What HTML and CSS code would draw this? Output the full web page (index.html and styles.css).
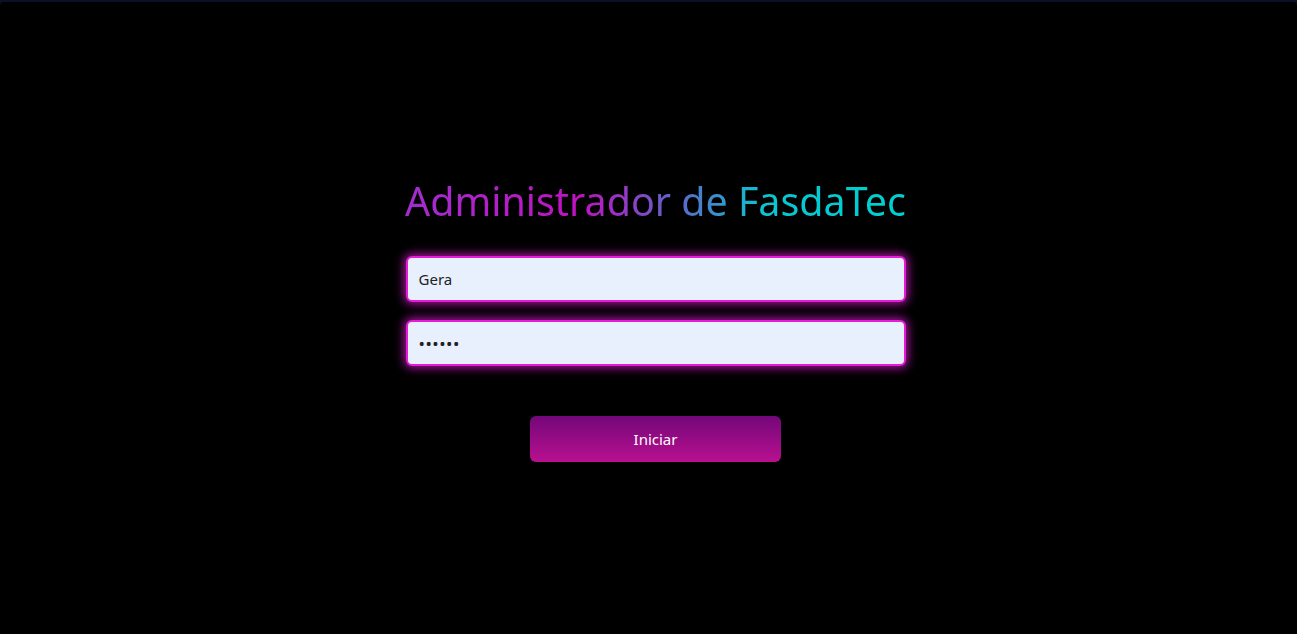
FILE: index.html
```html
<!DOCTYPE html>
<html lang="es">
<head>
<meta charset="utf-8">
<title>Administrador de FasdaTec</title>
<link rel="stylesheet" href="styles.css">
</head>
<body>
<div class="frame">
  <main class="login">
    <h1 class="title">Administrador de FasdaTec</h1>
    <form class="form">
      <input class="field" type="text" value="Gera">
      <input class="field field-pass" type="password" value="123456">
      <button class="submit" type="button">Iniciar</button>
    </form>
  </main>
</div>
</body>
</html>
```
FILE: styles.css
```css
html, body {
  margin: 0;
  height: 100%;
  background: #0b1026;
}
.frame {
  box-sizing: border-box;
  background: #000;
  border-radius: 4px 4px 0 0;
  margin-top: 2px;
  height: calc(100% - 2px);
  display: flex;
  justify-content: center;
  padding-left: 14px;
}
.login {
  width: 500px;
  padding-top: 174px;
  display: flex;
  flex-direction: column;
  align-items: center;
}
.title {
  margin: 0;
  font-family: "Noto Sans", sans-serif;
  font-weight: 400;
  font-size: 39.4px;
  line-height: 50px;
  white-space: nowrap;
  background: linear-gradient(90deg, #a12ecf 0%, #c112c3 35%, #5b6ac8 55%, #08c6d2 72%, #00d0d0 100%);
  -webkit-background-clip: text;
  background-clip: text;
  color: transparent;
}
.form {
  width: 100%;
  margin-top: 30px;
  display: flex;
  flex-direction: column;
  align-items: center;
}
.field {
  display: block;
  box-sizing: border-box;
  width: 100%;
  height: 46px;
  margin: 0 0 18px;
  padding: 0 11px;
  border: 2px solid #e41cd8;
  border-radius: 6px;
  background: #e8f0fe;
  box-shadow: 0 0 10px 2px rgba(226, 26, 214, 0.75);
  font-family: "Noto Sans", sans-serif;
  font-size: 15px;
  color: #222;
  outline: none;
}
.field-pass {
  font-size: 17px;
  letter-spacing: 0.5px;
}
.submit {
  margin-top: 32px;
  width: 251px;
  height: 46px;
  border: none;
  border-radius: 6px;
  background: linear-gradient(180deg, #730779 0%, #b9108f 100%);
  color: #fff;
  font-family: "Noto Sans", sans-serif;
  font-size: 15px;
  cursor: pointer;
}
```
